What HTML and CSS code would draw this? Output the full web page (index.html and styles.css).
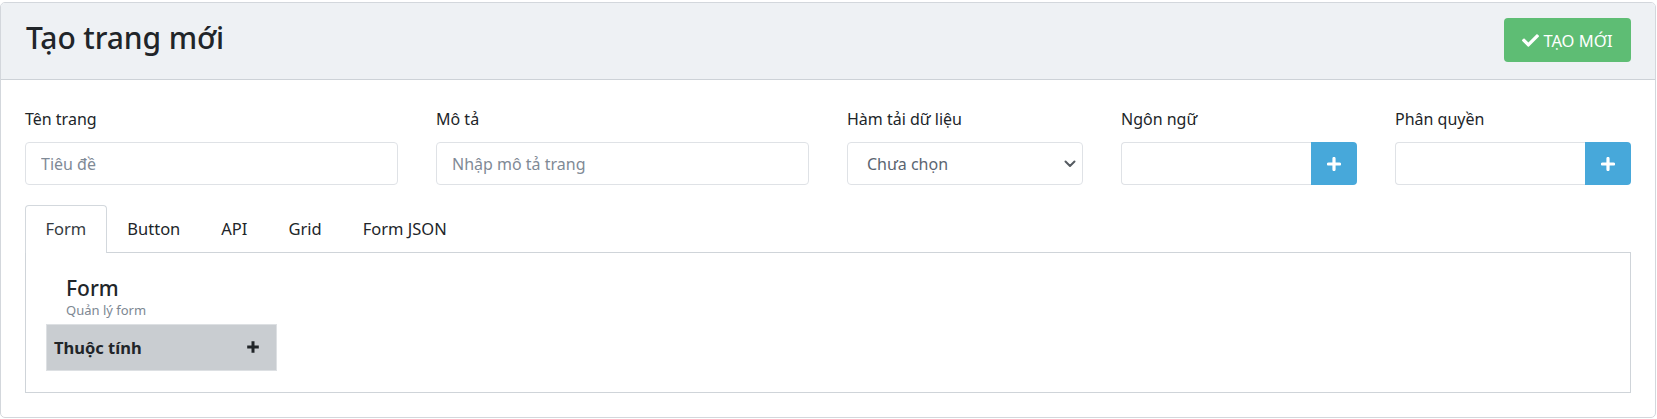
FILE: index.html
```html
<!DOCTYPE html>
<html lang="vi">
<head>
<meta charset="utf-8">
<title>Tạo trang mới</title>
<link rel="stylesheet" href="styles.css">
</head>
<body>
<div class="page">
  <div class="card">
    <div class="card-header">
      <h1 class="title">Tạo trang mới</h1>
      <button class="btn-create" type="button">
        <svg class="ico-check" viewBox="0 0 512 512" width="17" height="17"><path fill="#fff" d="M173.9 439.4L7.5 273c-10-10-10-26.2 0-36.2l36.2-36.2c10-10 26.2-10 36.2 0L192 312.7 432.1 72.6c10-10 26.2-10 36.2 0l36.2 36.2c10 10 10 26.2 0 36.2L210.1 439.4c-10 10-26.2 10-36.2 0z"/></svg>
        <span>TẠO MỚI</span>
      </button>
    </div>
    <div class="card-body">
      <div class="row">
        <div class="col col-3">
          <label class="lbl">Tên trang</label>
          <input class="ctrl" type="text" placeholder="Tiêu đề">
        </div>
        <div class="col col-3">
          <label class="lbl">Mô tả</label>
          <input class="ctrl" type="text" placeholder="Nhập mô tả trang">
        </div>
        <div class="col col-2">
          <label class="lbl">Hàm tải dữ liệu</label>
          <div class="select-wrap">
            <select class="ctrl sel"><option>Chưa chọn</option></select>
            <svg class="chev" viewBox="0 0 12 8" width="12" height="8"><path d="M1.5 1.5 6 6l4.5-4.5" fill="none" stroke="#555b61" stroke-width="2" stroke-linecap="round" stroke-linejoin="round"/></svg>
          </div>
        </div>
        <div class="col col-2">
          <label class="lbl">Ngôn ngữ</label>
          <div class="input-group">
            <input class="ctrl grp" type="text">
            <button class="btn-add" type="button"><svg viewBox="0 0 14 14" width="14" height="14"><path d="M7 1.5v11M1.5 7h11" stroke="#fff" stroke-width="3.2" stroke-linecap="round"/></svg></button>
          </div>
        </div>
        <div class="col col-2">
          <label class="lbl">Phân quyền</label>
          <div class="input-group">
            <input class="ctrl grp" type="text">
            <button class="btn-add" type="button"><svg viewBox="0 0 14 14" width="14" height="14"><path d="M7 1.5v11M1.5 7h11" stroke="#fff" stroke-width="3.2" stroke-linecap="round"/></svg></button>
          </div>
        </div>
      </div>

      <div class="tabs">
        <ul class="nav">
          <li class="nav-item active">Form</li>
          <li class="nav-item">Button</li>
          <li class="nav-item">API</li>
          <li class="nav-item">Grid</li>
          <li class="nav-item">Form JSON</li>
        </ul>
        <div class="tab-content">
          <div class="section-head">
            <h3 class="section-title">Form</h3>
            <div class="section-sub">Quản lý form</div>
          </div>
          <div class="prop-bar">
            <span class="prop-name">Thuộc tính</span>
            <svg viewBox="0 0 14 14" width="14" height="14"><path d="M7 1.2v11.6M1.2 7h11.6" stroke="#212529" stroke-width="3"/></svg>
          </div>
        </div>
      </div>
    </div>
  </div>
</div>
</body>
</html>
```

FILE: styles.css
```css
* { box-sizing: border-box; }

html, body {
  margin: 0;
  padding: 0;
  background: #ffffff;
  font-family: "Noto Sans", "Open Sans", sans-serif;
  color: #212529;
}

.page {
  padding-top: 2px;
  width: 1656px;
}

.card {
  border: 1px solid #d3d7dc;
  border-radius: 5px;
  background: #fff;
  overflow: hidden;
}

.card-header {
  height: 77px;
  background: #eef1f4;
  border-bottom: 1px solid #cdd2d7;
  display: flex;
  align-items: flex-start;
  justify-content: space-between;
  padding: 15px 24px 0 25px;
}

.title {
  margin: 2px 0 0 0;
  font-size: 30px;
  font-weight: 500;
  line-height: 36px;
  color: #212529;
  letter-spacing: -0.1px;
}

.btn-create {
  height: 44px;
  width: 127px;
  border: none;
  border-radius: 4px;
  background: #5ebd74;
  color: #fff;
  font-family: inherit;
  font-size: 16.5px;
  display: flex;
  align-items: center;
  justify-content: center;
  gap: 4px;
  padding: 0;
}

.ico-check { display: block; }

.card-body {
  padding: 27px 24px 24px 24px;
}

.row {
  display: flex;
  margin: 0 -19px;
}

.col {
  padding: 0 19px;
  display: flex;
  flex-direction: column;
}

.col-3 { width: 25%; }
.col-2 { width: 16.6667%; }

.lbl {
  font-size: 16px;
  line-height: 24px;
  margin-bottom: 11px;
  color: #212529;
}

.ctrl {
  height: 43px;
  width: 100%;
  border: 1px solid #dfe2e6;
  border-radius: 4px;
  padding: 0 15px;
  font-family: inherit;
  font-size: 16px;
  color: #495057;
  background: #fff;
  outline: none;
}

.ctrl::placeholder { color: #7f8a96; }

.select-wrap {
  position: relative;
}

.sel {
  appearance: none;
  -webkit-appearance: none;
  color: #5b6571;
  padding-left: 19px;
}

.chev {
  position: absolute;
  right: 7px;
  top: 18px;
}

.input-group {
  display: flex;
}

.grp {
  flex: 1;
  min-width: 0;
  border-radius: 4px 0 0 4px;
  border-right: none;
}

.btn-add {
  width: 46px;
  height: 43px;
  flex: none;
  border: none;
  border-radius: 0 4px 4px 0;
  background: #47a8da;
  display: flex;
  align-items: center;
  justify-content: center;
  padding: 0;
}

.tabs {
  margin-top: 20px;
}

.nav {
  display: flex;
  list-style: none;
  margin: 0;
  padding: 0;
}

.nav-item {
  font-size: 16.5px;
  line-height: 24px;
  padding: 11px 19.5px 12px 19.5px;
  border: 1px solid transparent;
  border-bottom: none;
  border-radius: 4px 4px 0 0;
  color: #212529;
  margin-bottom: -1px;
  background: transparent;
}

.nav-item.active {
  border-color: #d3d8dd;
  background: #fff;
  color: #343a40;
  position: relative;
}

.tab-content {
  border: 1px solid #cfd4d9;
  padding: 20px 20px 20px 20px;
  height: 141px;
}

.section-head {
  padding-left: 20px;
  margin-top: 2px;
}

.section-title {
  margin: 0;
  font-size: 21px;
  font-weight: 500;
  line-height: 26px;
  color: #212529;
}

.section-sub {
  font-size: 13px;
  line-height: 18px;
  color: #7d8792;
}

.prop-bar {
  margin-top: 5px;
  width: 231px;
  height: 47px;
  background: #c9cdd1;
  border: 1px solid #dde0e3;
  display: flex;
  align-items: center;
  justify-content: space-between;
  padding: 0 16px 0 7px;
}

.prop-name {
  font-weight: 700;
  font-size: 16.5px;
  color: #212529;
}

.prop-bar svg { display: block; margin-top: -2px; }
```
